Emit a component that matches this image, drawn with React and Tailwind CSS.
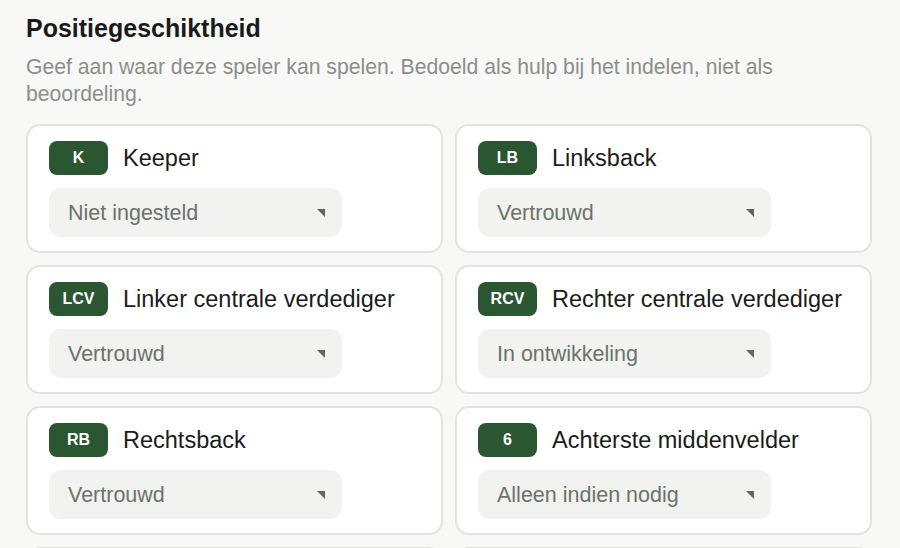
import React from 'react';

const positions = [
  { code: 'K', name: 'Keeper', value: 'Niet ingesteld' },
  { code: 'LB', name: 'Linksback', value: 'Vertrouwd' },
  { code: 'LCV', name: 'Linker centrale verdediger', value: 'Vertrouwd' },
  { code: 'RCV', name: 'Rechter centrale verdediger', value: 'In ontwikkeling' },
  { code: 'RB', name: 'Rechtsback', value: 'Vertrouwd' },
  { code: '6', name: 'Achterste middenvelder', value: 'Alleen indien nodig' },
  { code: '8', name: 'Centrale middenvelder', value: 'Niet ingesteld' },
  { code: '10', name: 'Aanvallende middenvelder', value: 'Niet ingesteld' },
];

// Small select-like control with the macOS style corner arrow
const FakeSelect = ({ value }) => (
  <div className="flex items-center justify-between w-[293px] h-[49px] rounded-[12px] bg-[#f2f2f0] pl-[19px] pr-[17px]">
    <span className="text-[21.5px] leading-[26px] text-[#6b736a]">{value}</span>
    <svg width="8" height="8" viewBox="0 0 8 8" className="shrink-0">
      <polygon points="0,0 8,0 8,8" fill="#5d675e" />
    </svg>
  </div>
);

const PositionCard = ({ code, name, value }) => (
  <div className="bg-white border-2 border-[#e3e3e1] rounded-[14px] pt-[15px] pb-[14px] pl-[21px] pr-[21px]">
    <div className="flex items-center h-[34px]">
      <div className="flex items-center justify-center w-[59px] h-[34px] rounded-[8px] bg-[#2a5632] text-white text-[16px] leading-none font-bold">
        {code}
      </div>
      <span className="ml-[15px] text-[23.5px] leading-[34px] text-[#1b1b1b] whitespace-nowrap">{name}</span>
    </div>
    <div className="mt-[13px]">
      <FakeSelect value={value} />
    </div>
  </div>
);

export default function App() {
  return (
    <div
      className="h-[548px] overflow-hidden bg-[#f8f8f7] pl-[26px] pr-[28px] pt-[13px]"
      style={{ fontFamily: '"Liberation Sans", Arial, sans-serif' }}
    >
      <h2 className="text-[25px] leading-[30px] font-bold text-[#1a1a1a]">Positiegeschiktheid</h2>
      <p className="mt-[10px] text-[21.2px] leading-[27px] text-[#8b8f8a]">
        Geef aan waar deze speler kan spelen. Bedoeld als hulp bij het indelen, niet als beoordeling.
      </p>
      <div className="mt-[17px] grid grid-cols-2 gap-[12px]">
        {positions.map((p) => (
          <PositionCard key={p.code} {...p} />
        ))}
      </div>
    </div>
  );
}
